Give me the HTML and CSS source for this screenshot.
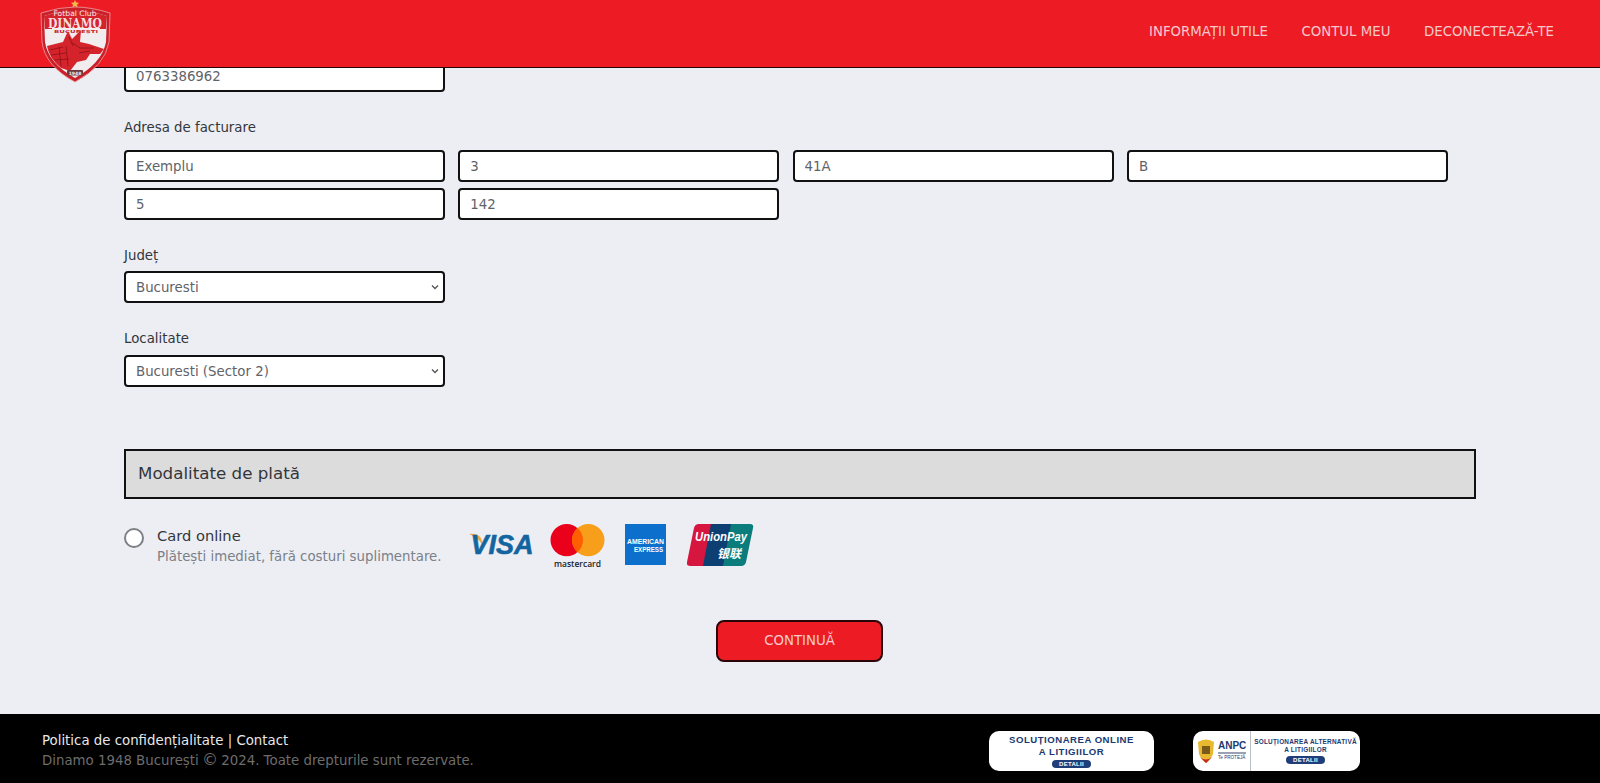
FILE: index.html
```html
<!DOCTYPE html>
<html lang="ro">
<head>
<meta charset="utf-8">
<title>Dinamo</title>
<link rel="stylesheet" href="styles.css">
</head>
<body>
<header class="topbar">
  <a class="logo" href="#">
    <svg width="72" height="84" viewBox="0 0 72 84">
      <polygon points="36,0 37.2,2.4 40,2.8 38,4.7 38.5,7.4 36,6.1 33.5,7.4 34,4.7 32,2.8 34.8,2.4" fill="#f6b84a"/>
      <path d="M2 13 Q20 7 36 7 Q52 7 71 13 L70 42 Q66 66 36 82 Q6 66 3 42 Z" fill="#c9202a" stroke="#eca3a6" stroke-width=".8"/>
      <path d="M5 16 Q20 11 36 11 Q52 11 68 16 L67 42 Q63 63 36 78 Q9 63 6 42 Z" fill="#f1eced"/>
      <path d="M5 16 Q20 11 36 11 Q52 11 68 16 L67 29 H6 Z" fill="#d5232b"/>
      <rect x="13" y="28" width="48" height="5" fill="#f1eced"/>
      <path d="M8 46 L24 42 L29 31 L33 39 L42 30 L41 42 L50 44 L65 49 L61 54 L51 54 L47 60 L38 62 L31 71 L22 68 Q10 58 8 46 Z" fill="#d5232b"/>
      <path d="M11 50 L24 47 M12 55 L27 53 M16 60 L30 59 M20 47 L22 66 M27 46 L29 66 M32 42 L41 48 L55 48 M40 53 L51 51 M30 37 L34 46" stroke="#8e1218" stroke-width=".8" fill="none"/>
      <rect x="28" y="70" width="16" height="5.5" rx="1" fill="#6f3a3d"/>
      <text x="36" y="16" class="logo-top" textLength="43" lengthAdjust="spacingAndGlyphs">Fotbal Club</text>
      <text x="36" y="27.5" class="logo-name" textLength="54" lengthAdjust="spacingAndGlyphs">DINAMO</text>
      <text x="37" y="32.5" class="logo-city" textLength="44" lengthAdjust="spacingAndGlyphs">BUCUREȘTI</text>
      <text x="36" y="74.6" class="logo-year">1948</text>
    </svg>
  </a>
  <nav class="menu">
    <a href="#">INFORMAȚII UTILE</a>
    <a href="#">CONTUL MEU</a>
    <a href="#">DECONECTEAZĂ-TE</a>
  </nav>
</header>

<main class="page">
  <div class="field-row"><input class="input" value="0763386962"></div>

  <div class="label label-address">Adresa de facturare</div>
  <div class="grid">
    <input class="input" value="Exemplu">
    <input class="input" value="3">
    <input class="input" value="41A">
    <input class="input" value="B">
    <input class="input" value="5">
    <input class="input" value="142">
  </div>

  <div class="label label-county">Județ</div>
  <select class="input select"><option>Bucuresti</option></select>

  <div class="label label-city">Localitate</div>
  <select class="input select"><option>Bucuresti (Sector 2)</option></select>

  <h2 class="section-title">Modalitate de plată</h2>

  <div class="payment">
    <input class="radio" type="radio" name="pay">
    <div class="pay-text">
      <div class="pay-name">Card online</div>
      <div class="pay-note">Plătești imediat, fără costuri suplimentare.</div>
    </div>
    <div class="cards">
      <svg class="card-visa" width="68" height="34" viewBox="0 0 68 34">
        <path d="M1 6 Q9 5 13 10 L15 18 Q10 9 1 6 Z" fill="#f0a63b"/>
        <text x="34" y="26" class="visa" textLength="63" lengthAdjust="spacingAndGlyphs">VISA</text>
      </svg>
      <svg class="card-mc" width="55" height="46" viewBox="0 0 56 46">
        <circle cx="17" cy="17" r="16.5" fill="#eb001b"/>
        <circle cx="39" cy="17" r="16.5" fill="#f79e1b"/>
        <path d="M28 4.6 A16.5 16.5 0 0 1 28 29.4 A16.5 16.5 0 0 1 28 4.6 Z" fill="#ff5f00"/>
        <text x="28" y="44" class="mc" textLength="48" lengthAdjust="spacingAndGlyphs">mastercard</text>
      </svg>
      <svg class="card-amex" width="41" height="41" viewBox="0 0 41 41">
        <rect width="41" height="41" fill="#0b6fcb"/>
        <text x="2" y="20" class="amex" textLength="37" lengthAdjust="spacingAndGlyphs">AMERICAN</text>
        <text x="9" y="28" class="amex" textLength="29" lengthAdjust="spacingAndGlyphs">EXPRESS</text>
      </svg>
      <svg class="card-up" width="67" height="42" viewBox="0 0 67 42">
        <path d="M12 0 H26 L18 42 H3 Q-1 42 0 38 L7 4 Q8 0 12 0 Z" fill="#d6163f"/>
        <path d="M24 0 H46 L38 42 H16 Z" fill="#0d3f73"/>
        <path d="M44 0 H63 Q67 0 66 4 L59 38 Q58 42 54 42 H36 Z" fill="#0a7c7c"/>
        <text x="34" y="17" class="up" textLength="52" lengthAdjust="spacingAndGlyphs">UnionPay</text>
        <text x="42" y="34" class="up-cn">银联</text>
      </svg>
    </div>
  </div>

  <div class="actions"><button class="cta">CONTINUĂ</button></div>
</main>

<footer class="footer">
  <div class="foot-text">
    <div class="foot-links"><a href="#">Politica de confidențialitate</a> | <a href="#">Contact</a></div>
    <div class="foot-copy">Dinamo 1948 București <span class="copy-mark">©</span> 2024. Toate drepturile sunt rezervate.</div>
  </div>
  <div class="badge badge-sol">
    <span class="b-title">SOLUȚIONAREA ONLINE<br>A LITIGIILOR</span>
    <span class="b-pill">DETALII</span>
  </div>
  <div class="badge badge-anpc">
    <div class="anpc-left">
      <svg width="18" height="26" viewBox="0 0 18 26">
        <path d="M1 4 Q9 -1 17 4 L16 16 Q13 23 9 25 Q5 23 2 16 Z" fill="#e8b92f"/>
        <rect x="5" y="8" width="8" height="8" fill="#7a5a1a"/>
        <path d="M3 19 Q9 24 15 19 L9 25 Z" fill="#c8242b"/>
      </svg>
      <div class="anpc-words">
        <b>ANPC</b>
        <i class="anpc-line"></i>
        <span>Te PROTEJĂ</span>
      </div>
    </div>
    <div class="anpc-right">
      <span class="b-title small">SOLUȚIONAREA ALTERNATIVĂ<br>A LITIGIILOR</span>
      <span class="b-pill">DETALII</span>
    </div>
  </div>
</footer>
</body>
</html>
```
FILE: styles.css
```css
* { box-sizing: border-box; }
html, body { margin: 0; height: 783px; overflow: hidden; }
body {
  background: #eceef4;
  color: #33363b;
  font-family: "DejaVu Sans", sans-serif;
  font-size: 13.33px;
  display: flex;
  flex-direction: column;
}
a { color: inherit; text-decoration: none; }

.topbar {
  position: absolute;
  top: 0; left: 0; right: 0;
  height: 68px;
  background: #ed1c24;
  border-bottom: 1px solid #2a0507;
  z-index: 2;
  display: flex;
  justify-content: space-between;
}
.logo { margin: 0 0 0 39px; height: 84px; }
.logo-top { fill: #f7e9ea; font: 7.5px "DejaVu Sans", sans-serif; text-anchor: middle; }
.logo-name { fill: #f7dfe0; font: bold 12px "DejaVu Serif", serif; text-anchor: middle; }
.logo-city { fill: #c9242b; font: bold 4px "DejaVu Sans", sans-serif; text-anchor: middle; }
.logo-year { fill: #f3eef0; font: bold 4.5px "DejaVu Sans", sans-serif; text-anchor: middle; }
.menu { display: flex; gap: 33.6px; padding: 24px 46px 0 0; font-size: 13.33px; color: #f6c9cc; line-height: 16px; }

.page { flex: 1; padding: 60px 0 0 124px; display: flex; flex-direction: column; align-items: flex-start; }
.input {
  width: 321px;
  height: 32px;
  border: 2px solid #111;
  border-radius: 4px;
  background: #fff;
  color: #5f6369;
  font: 13.33px "DejaVu Sans", sans-serif;
  padding: 0 10px;
  display: block;
}
.select {
  appearance: none;
  background: #fff url("data:image/svg+xml,%3Csvg xmlns='http://www.w3.org/2000/svg' width='8' height='6' viewBox='0 0 8 6'%3E%3Cpath d='M1 1.5 L4 4.5 L7 1.5' fill='none' stroke='%23555' stroke-width='1.3'/%3E%3C/svg%3E") no-repeat right 4px center;
}
.label { line-height: 16px; color: #33363b; }
.label-address { margin: 28px 0 14px; }
.grid { display: grid; grid-template-columns: repeat(4, 321px); column-gap: 13.3px; row-gap: 6px; }
.label-county { margin: 28px 0 7px; }
.label-city { margin: 28px 0 8px; }

.section-title {
  width: 1352px;
  height: 50px;
  margin: 62px 0 0;
  background: #dcdcdc;
  border: 2px solid #111;
  padding: 0 12px;
  font: 400 16.7px/45px "DejaVu Sans", sans-serif;
  color: #33363b;
}
.payment { display: flex; align-items: flex-start; margin-top: 25px; }
.radio {
  appearance: none;
  width: 20px; height: 20px;
  margin: 4px 0 0 0;
  background: #fff;
  border: 2px solid #7d8085;
  border-radius: 50%;
}
.pay-text { margin-left: 13px; width: 311px; padding-top: 1px; }
.pay-name { font-size: 14.67px; line-height: 22px; color: #33363b; }
.pay-note { font-size: 13.33px; line-height: 20px; color: #7b7f87; }
.cards { display: flex; align-items: flex-start; }
.card-visa { margin-top: 4px; }
.card-mc { margin-left: 14px; margin-top: -1px; }
.card-amex { margin-left: 20px; }
.card-up { margin-left: 21px; }
.visa { fill: #14659f; stroke: #14659f; stroke-width: .6px; font: italic bold 28px "Liberation Sans", sans-serif; text-anchor: middle; }
.mc { fill: #222; font: 600 9px "Open Sans", sans-serif; text-anchor: middle; }
.amex { fill: #fff; font: bold 7px "Liberation Sans", sans-serif; }
.up { fill: #fff; font: italic bold 12px "Liberation Sans", sans-serif; text-anchor: middle; }
.up-cn { fill: #fff; font: italic bold 12px "Noto Sans CJK SC", sans-serif; text-anchor: middle; }

.actions { width: 1351px; display: flex; justify-content: center; margin-top: 51px; }
.cta {
  width: 167px; height: 42px;
  background: #ed1c24;
  border: 2px solid #2a0507;
  border-radius: 8px;
  color: #f6c9cc;
  font: 13.33px "DejaVu Sans", sans-serif;
  padding: 0 0 2px;
}

.footer {
  height: 69px;
  background: #000;
  display: flex;
  align-items: flex-start;
  padding-left: 42px;
}
.foot-text { width: 947px; padding-top: 17px; }
.foot-links { color: #e8e8e8; line-height: 20px; }
.foot-copy { color: #6d6d6d; line-height: 20px; }
.copy-mark { font-size: 16px; margin: 0 -1px; line-height: 1; }
.badge {
  margin-top: 17px;
  height: 40px;
  background: #fff;
  border-radius: 10px;
  color: #1b3a72;
  display: flex;
  align-items: center;
}
.badge-sol { width: 165px; flex-direction: column; justify-content: center; }
.badge-anpc { width: 167px; margin-left: 39px; }
.b-title { font: bold 9.6px/12px "Liberation Sans", sans-serif; text-align: center; letter-spacing: .5px; color: #1b3a72; }
.b-title.small { font-size: 6.4px; line-height: 8px; letter-spacing: .25px; }
.b-pill { background: #1f3d78; color: #fff; border-radius: 5px; font: bold 6px/8px "Liberation Sans", sans-serif; padding: 0 7px; margin-top: 2px; letter-spacing: .3px; }
.anpc-left { width: 58px; height: 100%; display: flex; align-items: center; gap: 3px; padding-left: 4px; border-right: 1px solid #b9bdc7; }
.anpc-words { display: flex; flex-direction: column; align-items: flex-start; }
.anpc-words b { font: bold 10px/10px "Liberation Sans", sans-serif; color: #1b3a72; }
.anpc-line { width: 28px; height: 2px; background: #9aa1b4; margin: 1px 0; }
.anpc-words span { font: 4.6px/6px "Liberation Sans", sans-serif; color: #1b3a72; white-space: nowrap; }
.anpc-right { flex: 1; display: flex; flex-direction: column; align-items: center; }
```
